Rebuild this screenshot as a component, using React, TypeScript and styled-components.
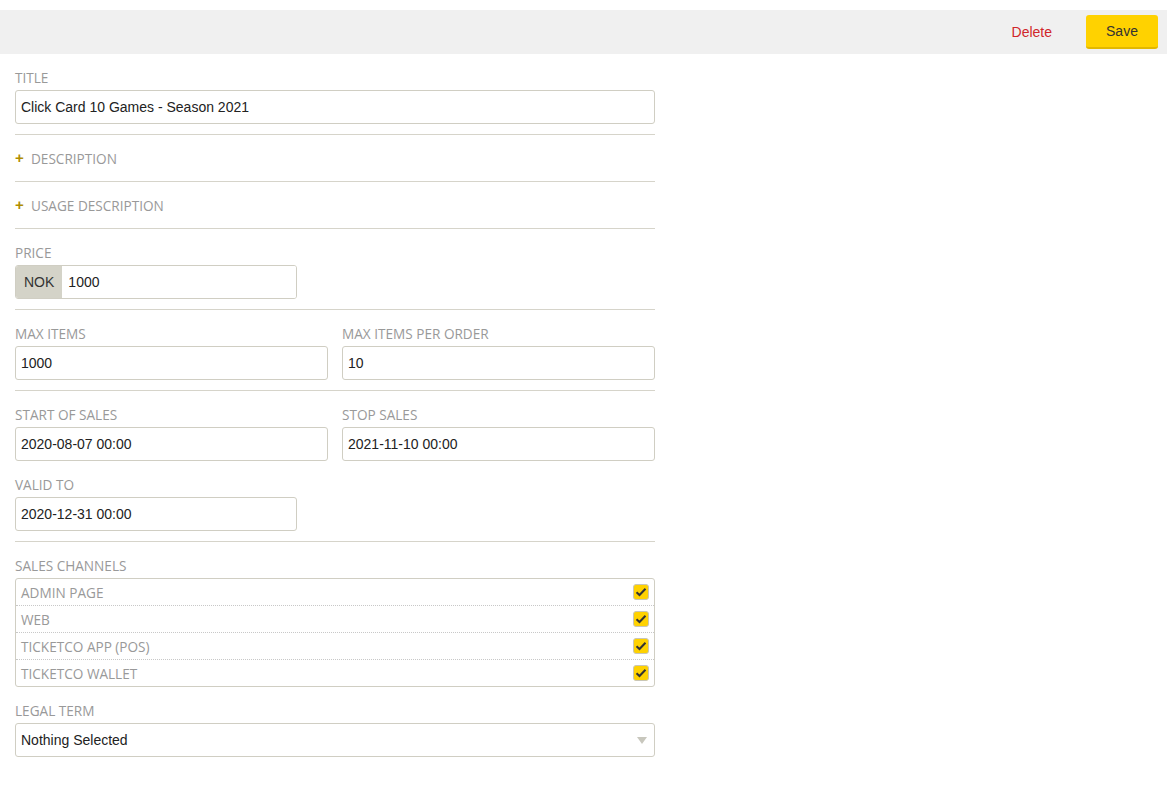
import { createGlobalStyle } from 'styled-components';
import styled from 'styled-components';

const GlobalStyle = createGlobalStyle`
    html, body {
        margin: 0;
        padding: 0;
        background: #ffffff;
    }
    body {
        font-family: Arial, 'Liberation Sans', sans-serif;
    }
`

const Page = styled.div`
    padding-top: 10px;
`
const Toolbar = styled.div`
    display: flex;
    justify-content: flex-end;
    align-items: center;
    gap: 22px;
    height: 44px;
    padding: 0 9px 0 0;
    background-color: #f0f0f0;
`
const DeleteButton = styled.button`
    background: none;
    border: none;
    color: #d0262a;
    font-family: Arial, 'Liberation Sans', sans-serif;
    font-size: 14px;
    padding: 0 12px;
    cursor: pointer;
`
const SaveButton = styled.button`
    width: 72px;
    height: 34px;
    background-color: #ffd200;
    border: none;
    border-bottom: 2px solid #e2b800;
    border-radius: 3px;
    color: #333;
    font-family: Arial, 'Liberation Sans', sans-serif;
    font-size: 14px;
    cursor: pointer;
`
const Form = styled.form`
    width: 640px;
    padding: 0 0 0 15px;
`
const Section = styled.div<{ $last?: boolean }>`
    padding-bottom: 10px;
    border-bottom: ${p => p.$last ? 'none' : '1px solid #d6d4ca'};
`
const Row = styled.div`
    display: grid;
    grid-template-columns: 313px 1fr;
    column-gap: 14px;
`
const Field = styled.div<{ $width?: number }>`
    padding-top: 15px;
    width: ${p => p.$width ? `${p.$width}px` : 'auto'};
`
const Label = styled.div`
    font-family: 'Open Sans', sans-serif;
    font-size: 13.6px;
    line-height: 17px;
    color: #999;
    text-transform: uppercase;
    margin-bottom: 4px;
`
const Input = styled.input`
    box-sizing: border-box;
    display: block;
    width: 100%;
    height: 34px;
    padding: 0 5px;
    border: 1px solid #d0cec3;
    border-radius: 3px;
    font-family: Arial, 'Liberation Sans', sans-serif;
    font-size: 14px;
    color: #222;
    background: #fff;
    outline: none;
`
const InputGroup = styled.div`
    display: flex;
    box-sizing: border-box;
    height: 34px;
    border: 1px solid #d0cec3;
    border-radius: 3px;
    overflow: hidden;
`
const Addon = styled.span`
    display: flex;
    align-items: center;
    padding: 0 8px;
    background-color: #d4d3c8;
    color: #333;
    font-size: 14px;
`
const GroupInput = styled(Input)`
    border: none;
    border-radius: 0;
    height: 32px;
    flex: 1;
    padding-left: 6px;
`
const Accordion = styled.div`
    display: flex;
    align-items: center;
    gap: 7px;
    height: 46px;
    border-bottom: 1px solid #d6d4ca;
    font-family: 'Open Sans', sans-serif;
    font-size: 13.6px;
    color: #999;
    text-transform: uppercase;
    cursor: pointer;
`
const Plus = styled.span`
    color: #b08d00;
    font-family: Arial, 'Liberation Sans', sans-serif;
    font-weight: bold;
    font-size: 15px;
    width: 9px;
    line-height: 1;
    margin-top: -1px;
`
const ChannelList = styled.div`
    border: 1px solid #d0cec3;
    border-radius: 3px;
`
const Channel = styled.label`
    display: flex;
    align-items: center;
    justify-content: space-between;
    height: 26px;
    padding: 0 5px 0 5px;
    font-family: 'Open Sans', sans-serif;
    font-size: 13.6px;
    color: #999;
    text-transform: uppercase;
    & + & {
        border-top: 1px dotted #c8c8c8;
    }
`
const Check = styled.span`
    display: flex;
    align-items: center;
    justify-content: center;
    box-sizing: border-box;
    width: 16px;
    height: 16px;
    background-color: #ffd200;
    border: 1px solid #c9c6b6;
    border-radius: 3px;
`
const Select = styled.div`
    display: flex;
    align-items: center;
    justify-content: space-between;
    box-sizing: border-box;
    height: 34px;
    padding: 0 6px 0 5px;
    border: 1px solid #d0cec3;
    border-radius: 3px;
    font-size: 14px;
    color: #222;
`
const Caret = styled.span`
    width: 0;
    height: 0;
    border-left: 5px solid transparent;
    border-right: 5px solid transparent;
    border-top: 7px solid #c8c7bd;
    margin-right: 1px;
`

const channels = ['Admin page', 'Web', 'TicketCo App (POS)', 'TicketCo Wallet'];

function CheckMark() {
    return (
        <svg width="12" height="10" viewBox="0 0 12 10">
            <path d="M1.5 5.2 L4.5 8 L10.5 1.8" fill="none" stroke="#333" strokeWidth="2" />
        </svg>
    )
}

function App() {
    return (
        <Page>
            <GlobalStyle />
            <Toolbar>
                <DeleteButton type='button'>Delete</DeleteButton>
                <SaveButton type='button'>Save</SaveButton>
            </Toolbar>

            <Form onSubmit={(e) => e.preventDefault()}>
                <Section>
                    <Field>
                        <Label>Title</Label>
                        <Input defaultValue='Click Card 10 Games - Season 2021' />
                    </Field>
                </Section>

                <Accordion><Plus>+</Plus>Description</Accordion>
                <Accordion><Plus>+</Plus>Usage description</Accordion>

                <Section>
                    <Field $width={282}>
                        <Label>Price</Label>
                        <InputGroup>
                            <Addon>NOK</Addon>
                            <GroupInput defaultValue='1000' />
                        </InputGroup>
                    </Field>
                </Section>

                <Section>
                    <Row>
                        <Field>
                            <Label>Max items</Label>
                            <Input defaultValue='1000' />
                        </Field>
                        <Field>
                            <Label>Max items per order</Label>
                            <Input defaultValue='10' />
                        </Field>
                    </Row>
                </Section>

                <Section>
                    <Row>
                        <Field>
                            <Label>Start of sales</Label>
                            <Input defaultValue='2020-08-07 00:00' />
                        </Field>
                        <Field>
                            <Label>Stop sales</Label>
                            <Input defaultValue='2021-11-10 00:00' />
                        </Field>
                    </Row>
                    <Field $width={282}>
                        <Label>Valid to</Label>
                        <Input defaultValue='2020-12-31 00:00' />
                    </Field>
                </Section>

                <Section $last>
                    <Field>
                        <Label>Sales channels</Label>
                        <ChannelList>
                            {channels.map(c => (
                                <Channel key={c}>
                                    {c}
                                    <Check><CheckMark /></Check>
                                </Channel>
                            ))}
                        </ChannelList>
                    </Field>
                    <Field>
                        <Label>Legal term</Label>
                        <Select>
                            Nothing Selected
                            <Caret />
                        </Select>
                    </Field>
                </Section>
            </Form>
        </Page>
    )
}

export default App;
